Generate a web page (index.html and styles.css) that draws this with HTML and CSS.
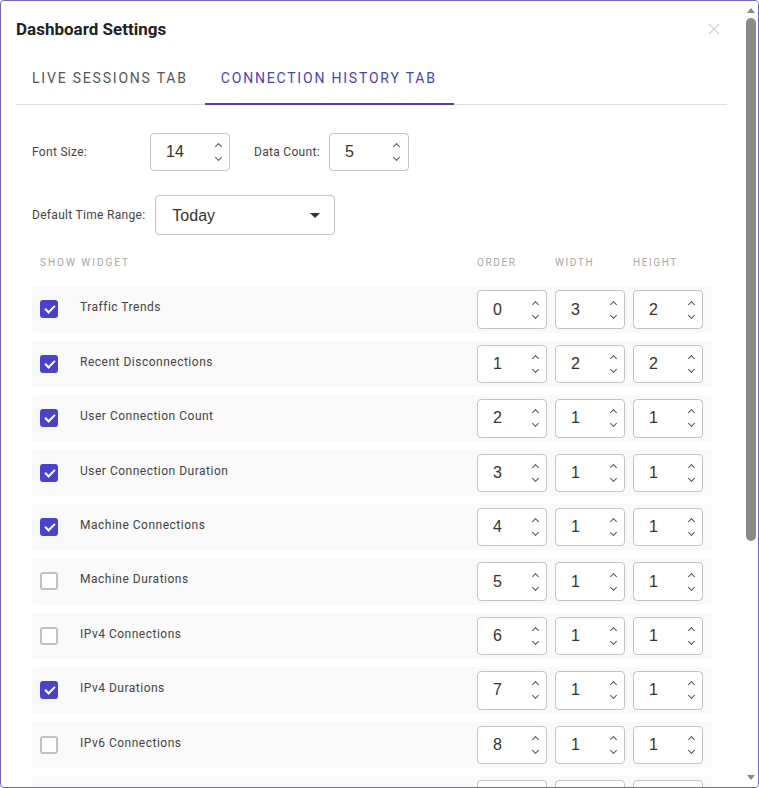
FILE: index.html
```html
<!DOCTYPE html>
<html lang="en">
<head>
  <meta charset="UTF-8">
  <meta name="viewport" content="width=device-width, initial-scale=1.0">
  <title>Dashboard Settings</title>
  <link rel="stylesheet" href="styles.css">
</head>
<body>
  <div class="modal">
    <div class="modal-body">
      <div class="modal-header">
        <h2>Dashboard Settings</h2>
        <button class="close" type="button" aria-label="Close">
          <svg width="12" height="12" viewBox="0 0 12 12"><path d="M1 1L11 11M11 1L1 11" stroke="#d4d4d4" stroke-width="1.4" fill="none"/></svg>
        </button>
      </div>

      <div class="tabs">
        <div class="tab">LIVE SESSIONS TAB</div>
        <div class="tab active">CONNECTION HISTORY TAB</div>
      </div>

      <div class="panel">
        <div class="field-row">
          <label class="lbl lbl-wide">Font Size:</label>
          <div class="num num-lg"><input type="number" value="14"><span class="spin"><i class="up"></i><i class="down"></i></span></div>
          <label class="lbl lbl-gap">Data Count:</label>
          <div class="num num-lg"><input type="number" value="5"><span class="spin"><i class="up"></i><i class="down"></i></span></div>
        </div>

        <div class="field-row">
          <label class="lbl lbl-range">Default Time Range:</label>
          <div class="select">
            <select>
              <option>Today</option>
              <option>Last 7 Days</option>
              <option>Last 30 Days</option>
            </select>
            <span class="caret"></span>
          </div>
        </div>

        <div class="widget-head">
          <span>SHOW WIDGET</span>
          <span>ORDER</span>
          <span>WIDTH</span>
          <span>HEIGHT</span>
        </div>

        <div id="widgets"></div>
      </div>
    </div>

    <div class="scrollbar">
      <span class="sb-arrow sb-up"></span>
      <div class="sb-track"><div class="sb-thumb"></div></div>
      <span class="sb-arrow sb-down"></span>
    </div>
  </div>

  <script>
    const widgets = [
      ["Traffic Trends", true, 0, 3, 2],
      ["Recent Disconnections", true, 1, 2, 2],
      ["User Connection Count", true, 2, 1, 1],
      ["User Connection Duration", true, 3, 1, 1],
      ["Machine Connections", true, 4, 1, 1],
      ["Machine Durations", false, 5, 1, 1],
      ["IPv4 Connections", false, 6, 1, 1],
      ["IPv4 Durations", true, 7, 1, 1],
      ["IPv6 Connections", false, 8, 1, 1],
      ["IPv6 Durations", false, 9, 1, 1],
      ["Protocol Connections", false, 10, 1, 1],
      ["Protocol Durations", false, 11, 1, 1],
      ["Hourly Activity", true, 12, 2, 1],
      ["Peak Hours", false, 13, 1, 1],
      ["Top Users", false, 14, 1, 1]
    ];

    function numBox(v) {
      return `<div class="num"><input type="number" value="${v}"><span class="spin"><i class="up"></i><i class="down"></i></span></div>`;
    }

    document.getElementById("widgets").innerHTML = widgets.map(w => `
      <div class="widget-row">
        <label class="widget-name">
          <input type="checkbox" ${w[1] ? "checked" : ""}>
          <span>${w[0]}</span>
        </label>
        ${numBox(w[2])}
        ${numBox(w[3])}
        ${numBox(w[4])}
      </div>
    `).join("");
  </script>
</body>
</html>
```

FILE: styles.css
```css
* {
  box-sizing: border-box;
}
html, body {
  margin: 0;
  padding: 0;
  background: #fff;
}
body {
  font-family: Roboto, "Liberation Sans", Arial, sans-serif;
  color: #444;
}
.modal {
  display: flex;
  height: 788px;
  border: 1px solid #6f66c9;
  border-radius: 4px;
  background: #fff;
  overflow: hidden;
}
.modal-body {
  flex: 1;
  min-width: 0;
  overflow-y: auto;
  scrollbar-width: none;
}
.modal-body::-webkit-scrollbar {
  display: none;
}

/* scrollbar drawn to match the screenshot */
.scrollbar {
  flex: none;
  width: 15px;
  display: flex;
  flex-direction: column;
  align-items: center;
  background: #fff;
}
.sb-arrow {
  flex: none;
  width: 0;
  height: 0;
  border-left: 4px solid transparent;
  border-right: 4px solid transparent;
}
.sb-up {
  margin: 7px 0 4px;
  border-bottom: 5px solid #8a8a8a;
}
.sb-down {
  margin: 4px 0 7px;
  border-top: 5px solid #8a8a8a;
}
.sb-track {
  flex: 1;
  width: 100%;
  display: flex;
  justify-content: center;
  padding-top: 1px;
}
.sb-thumb {
  width: 10px;
  height: 523px;
  border-radius: 5px;
  background: #8a8a8a;
}

.modal-header {
  display: flex;
  align-items: center;
  justify-content: space-between;
  padding: 18px 18px 15px 15px;
}
.modal-header h2 {
  margin: 0;
  font-size: 17px;
  line-height: 20px;
  font-weight: 700;
  color: #222;
}
.close {
  border: none;
  background: none;
  padding: 0;
  width: 22px;
  height: 20px;
  display: flex;
  align-items: center;
  justify-content: center;
}
.tabs {
  display: flex;
  margin: 0 16px 0 15px;
  border-bottom: 1px solid #dedede;
}
.tab {
  padding: 15px 17px 16px 16px;
  font-size: 14px;
  line-height: 18px;
  letter-spacing: 1.8px;
  color: #555;
  border-bottom: 2px solid transparent;
  margin-bottom: -1px;
}
.tab.active {
  color: #4a43b5;
  border-bottom-color: #4841b8;
}
.panel {
  padding: 28px 31px 40px 31px;
}
.field-row {
  display: flex;
  align-items: center;
  margin-bottom: 24px;
}
.lbl {
  font-size: 12px;
  letter-spacing: 0.3px;
  color: #444;
  margin-right: 9px;
}
.lbl-wide {
  width: 118px;
  margin-right: 0;
}
.lbl-gap {
  margin-left: 24px;
}
.lbl-range {
  margin-right: 10px;
}
.num {
  display: flex;
  align-items: center;
  width: 70px;
  border: 1px solid #c4c4c4;
  border-radius: 4px;
  background: #fff;
}
.num-lg {
  width: 80px;
}
.num input {
  flex: 1;
  min-width: 0;
  border: none;
  outline: none;
  background: transparent;
  font-family: "Liberation Sans", Arial, sans-serif;
  font-size: 16px;
  line-height: 18.4px;
  height: 36.4px;
  color: #333;
  padding: 9px 0 9px 15px;
  -moz-appearance: textfield;
  appearance: textfield;
}
.num input::-webkit-inner-spin-button,
.num input::-webkit-outer-spin-button {
  -webkit-appearance: none;
  margin: 0;
}
.spin {
  display: flex;
  flex-direction: column;
  align-items: center;
  justify-content: space-between;
  height: 18px;
  width: 10px;
  margin-right: 6px;
}
.spin i {
  display: block;
  width: 5px;
  height: 5px;
  border: 1.4px solid #555;
  transform: rotate(45deg);
}
.spin .up {
  border-right: none;
  border-bottom: none;
  margin-top: 1px;
}
.spin .down {
  border-left: none;
  border-top: none;
  margin-bottom: 1px;
}
.select {
  display: flex;
  align-items: center;
  width: 180px;
  height: 40px;
  border: 1px solid #c4c4c4;
  border-radius: 4px;
}
.select select {
  flex: 1;
  min-width: 0;
  height: 100%;
  border: none;
  outline: none;
  background: transparent;
  appearance: none;
  -webkit-appearance: none;
  font-family: "Liberation Sans", Arial, sans-serif;
  font-size: 16px;
  color: #333;
  padding: 0 0 0 16px;
}
.caret {
  width: 0;
  height: 0;
  border-left: 5px solid transparent;
  border-right: 5px solid transparent;
  border-top: 5px solid #333;
  margin-right: 14px;
}
.widget-head,
.widget-row {
  display: grid;
  grid-template-columns: 1fr 70px 70px 70px;
  column-gap: 8px;
  padding: 0 9px 0 8px;
}
.widget-head {
  margin-top: -3px;
  margin-bottom: 16px;
  font-size: 10px;
  line-height: 14px;
  letter-spacing: 2px;
  color: #a6a6a6;
}
.widget-head span:nth-child(n+2) {
  letter-spacing: 1.6px;
}
.widget-row {
  background: #f9f9f9;
  border-radius: 4px;
  padding-top: 4px;
  padding-bottom: 4px;
  margin-bottom: 8px;
  align-items: center;
}
.widget-name {
  display: flex;
  align-items: flex-start;
  align-self: stretch;
  gap: 22px;
  font-size: 12px;
  letter-spacing: 0.5px;
  color: #444;
}
.widget-name span {
  margin-top: 10px;
}
.widget-name input {
  appearance: none;
  -webkit-appearance: none;
  position: relative;
  flex: none;
  width: 18px;
  height: 18px;
  margin: 10px 0 0 0;
  border: 2px solid #c2c2c2;
  border-radius: 3px;
  background: #fff;
}
.widget-name input:checked {
  background: #4a43c9;
  border-color: #4a43c9;
}
.widget-name input:checked::after {
  content: "";
  position: absolute;
  left: 3px;
  top: 3px;
  width: 8px;
  height: 4px;
  border-left: 2px solid #fff;
  border-bottom: 2px solid #fff;
  transform: rotate(-45deg);
}
```
